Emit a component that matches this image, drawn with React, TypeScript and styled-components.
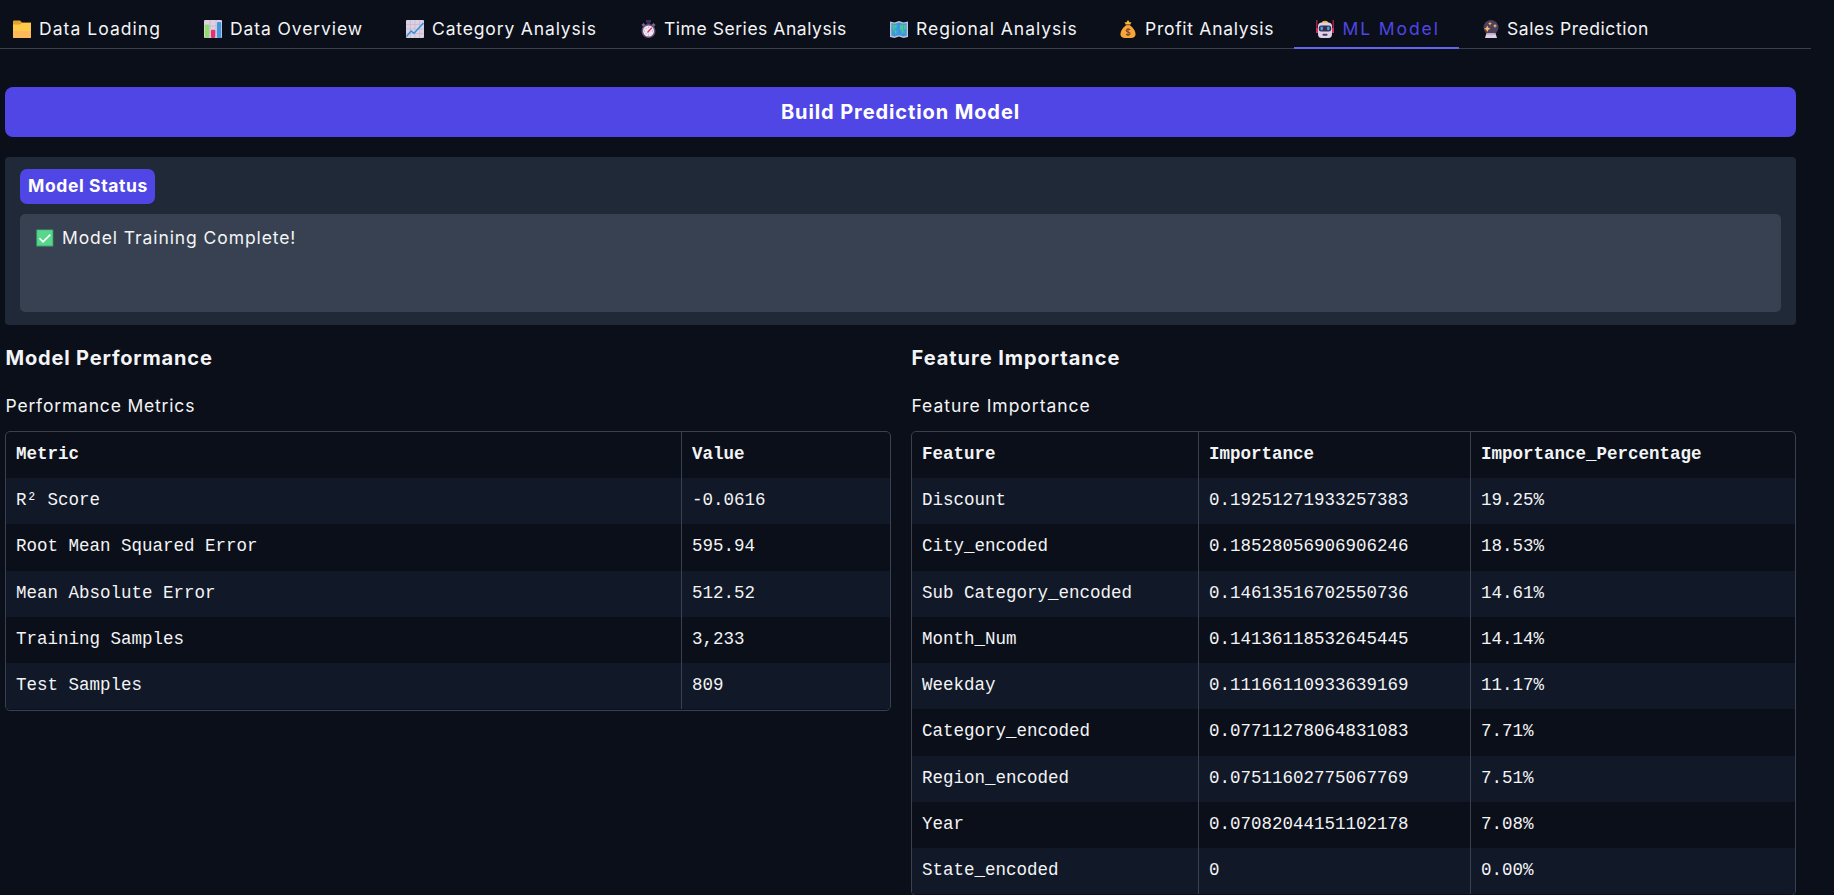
import React from 'react';
import styled, { createGlobalStyle, css } from 'styled-components';

const GlobalStyle = createGlobalStyle`
  * { box-sizing: border-box; }
  body {
    margin: 0;
    background: #0b0f19;
    color: #f3f4f6;
    font-family: Inter, "Open Sans", sans-serif;
    font-size: 17.5px;
  }
`;

const Page = styled.div`
  height: 895px;
  overflow: hidden;
  background: #0b0f19;
`;

const TabBar = styled.nav`
  display: flex;
  width: 1811px;
  height: 49px;
  border-bottom: 1px solid #374151;
`;

const Tab = styled.button<{ $width: number; $active?: boolean; $lead: number }>`
  flex: none;
  display: flex;
  align-items: center;
  width: ${p => p.$width}px;
  height: 49px;
  padding: 10px 0 0 ${p => p.$lead}px;
  border: 0;
  border-bottom: 2px solid ${p => (p.$active ? '#6366f1' : 'transparent')};
  background: transparent;
  color: ${p => (p.$active ? '#4f46e5' : '#f3f4f6')};
  font-family: inherit;
  font-size: 17.5px;
  line-height: 27px;
  white-space: nowrap;
`;

const Text = styled.span<{ $spacing?: number }>`
  letter-spacing: ${p => p.$spacing ?? 0}px;
`;

const Icon = styled.svg<{ $gap?: number }>`
  flex: none;
  width: 18px;
  height: 18px;
  margin-right: ${p => p.$gap ?? 8}px;
`;

const Content = styled.main`
  width: 1791px;
  margin: 38px 0 0 5px;
`;

const BuildButton = styled.button`
  display: block;
  width: 100%;
  height: 50px;
  border: 0;
  border-radius: 8px;
  padding: 0;
  background: #4f46e5;
  color: #fff;
  font-family: inherit;
  font-size: 20px;
  font-weight: 700;
`;

const StatusPanel = styled.section`
  height: 168px;
  margin-top: 20px;
  padding: 12px 15px 13px;
  border-radius: 4px;
  background: #1f2937;
`;

const StatusLabel = styled.div`
  display: flex;
  align-items: center;
  width: 135px;
  height: 35px;
  padding: 0 0 2px 8px;
  border-radius: 7px;
  background: #4f46e5;
  color: #fff;
  font-weight: 700;
  white-space: nowrap;
`;

const StatusBox = styled.div`
  display: flex;
  align-items: flex-start;
  height: 98px;
  margin-top: 10px;
  padding: 11px 16px;
  border-radius: 5px;
  background: #374151;
  line-height: 26px;

  svg { margin-top: 4px; }
`;

const Columns = styled.div`
  display: grid;
  grid-template-columns: 886px 885px;
  gap: 20px;
  margin-top: 18px;
`;

const Heading = styled.h3`
  margin: 0;
  padding-left: 0.5px;
  font-size: 20px;
  font-weight: 700;
  line-height: 30px;
`;

const TableLabel = styled.p`
  margin: 20px 0 11.75px;
  padding-left: 0.5px;
  line-height: 26px;
`;

const TableFrame = styled.div`
  border: 1px solid #374151;
  border-radius: 5px;
  overflow: hidden;
  padding-bottom: 0.75px;
  font-family: "Liberation Mono", monospace;
  font-size: 17.5px;
`;

const Row = styled.div<{ $columns: string; $head?: boolean }>`
  display: grid;
  grid-template-columns: ${p => p.$columns};
  height: 46.25px;
  ${p => p.$head && css`font-weight: 700;`}

  &:nth-child(even) { background: #111827; }
`;

const Cell = styled.div`
  padding: 9px 10px 0;
  line-height: 26px;
  white-space: pre;

  & + & { border-left: 1px solid #374151; }
`;

const FolderIcon = () => (
  <Icon viewBox="0 0 18 18">
    <path d="M0 1.500q0-1 1-1h6l2 2h9v5H0z" fill="#e5a02b" />
    <path d="M0 4.500h7l2-1.500h9v14q0 1-1 1H1q-1 0-1-1z" fill="#ffc94b" />
    <path d="M0 11h18v6q0 1-1 1H1q-1 0-1-1z" fill="#ffb95a" />
  </Icon>
);

const BarChartIcon = () => (
  <Icon viewBox="0 0 18 18">
    <rect width="18" height="18" rx="1" fill="#dcd1e3" />
    <path d="M6 0v18M12 0v18M0 6h18M0 12h18" stroke="#bcaecb" strokeWidth=".6" />
    <rect x="1" y="4.500" width="4.200" height="13.500" rx="1" fill="#8fdc68" />
    <rect x="7" y="9.700" width="4.200" height="8.300" rx="1" fill="#e8306f" />
    <rect x="13" y="2" width="4.200" height="16" rx="1" fill="#3c96e0" />
  </Icon>
);

const LineChartIcon = () => (
  <Icon viewBox="0 0 18 18">
    <rect width="18" height="18" rx="1" fill="#dcd1e3" />
    <path d="M4.500 0v18M9 0v18M13.500 0v18M0 4.500h18M0 9h18M0 13.500h18" stroke="#bfb2cd" strokeWidth=".6" />
    <path d="M.5 16.500 5 11l3 2.200L17.500 3" fill="none" stroke="#2f92dc" strokeWidth="1.500" />
  </Icon>
);

const StopwatchIcon = () => (
  <Icon viewBox="0 0 18 18" $gap={6}>
    <path d="M6 0h5v2.500H10v2H7v-2H6z" fill="#3f2d52" />
    <path d="m1.500 5 2-2 2 2-2 2zM15.500 5l-2-2-2 2 2 2z" fill="#7c688e" />
    <circle cx="8.500" cy="11" r="7" fill="#68547b" />
    <circle cx="8.500" cy="11" r="5.500" fill="#eee7f2" />
    <path d="M8.500 6.500v1M8.500 14.500v1M4 11h1M12 11h1M5.500 8l.7.7M5.500 14l.7-.7" stroke="#8b7a9b" strokeWidth=".7" />
    <path d="m7.500 12.500 4.300-4.700" stroke="#e02960" strokeWidth="1.300" />
  </Icon>
);

const MapIcon = () => (
  <Icon viewBox="0 0 18 18">
    <path d="m0 1.500 4.500 1L9 1l4.500 1.500 4.500-1v15.500l-4.500 1L9 16.500 4.500 18 0 17z" fill="#c7c4da" />
    <path d="m1.300 3 3.200.8L9 2.500l4.500 1.300L16.700 3v12.700l-3.200.9L9 15.300l-4.500 1.300-3.200-.8z" fill="#3d9be0" />
    <path d="m2 5 3-.5 2 1L6 8l-1.500 1.500L6.500 11 6 14.500 4.500 12 3 9zM10 5l3-.5 3 .7-.5 4-1.500.5.5 3-1.700 1.500-1.300-4-1.700-1.500z" fill="#4dc69a" />
    <path d="M4.500 3.500v13M9 2.500v13M13.500 3.500v13" stroke="#2f80c0" strokeWidth=".3" />
  </Icon>
);

const MoneyBagIcon = () => (
  <Icon viewBox="0 0 18 18" $gap={7}>
    <path d="m4.500 2 1.800.5L8 0l1.700 2.500L11.500 2l-2 4h-3z" fill="#f8bd36" />
    <path d="M6.500 5h3c3 2 6 5.500 6 9.200 0 3-2 3.800-7.500 3.800S.5 17.200.5 14.200C.5 10.500 3.500 7 6.500 5" fill="#f6a536" />
    <path d="M6 4.700h4" stroke="#91552f" strokeWidth="1.200" />
    <path d="M10.200 9.800C8.800 8.700 6.200 9 6.200 10.500c0 2 3.800 1 3.800 3s-2.500 2-4 .8M8 8v8" fill="none" stroke="#7c4930" strokeWidth="1.100" />
  </Icon>
);

const RobotIcon = () => (
  <Icon viewBox="0 0 18 18" $gap={8.5}>
    <path d="M.8 0v9M17.200 0v9" stroke="#b82251" strokeWidth="1.300" />
    <path d="M0 8h2v5H0zM16 8h2v5h-2z" fill="#d52e60" />
    <path d="M5.500 3Q6 .7 9 .7T12.500 3z" fill="#f8ae32" />
    <path d="M2 6q0-3.500 4-3.500h6q4 0 4 3.500v8q0 4-3.500 4h-7Q2 18 2 14z" fill="#ded2e6" />
    <rect x="2.800" y="5.500" width="12.400" height="6" rx="2.500" fill="#3c2b4c" />
    <rect x="4.500" y="6.500" width="2.400" height="3.800" rx="1" fill="#32afe8" />
    <rect x="11.100" y="6.500" width="2.400" height="3.800" rx="1" fill="#32afe8" />
    <rect x="6.500" y="13.800" width="5" height="2" rx=".8" fill="#4d3b5e" />
  </Icon>
);

const CrystalBallIcon = () => (
  <Icon viewBox="0 0 18 18" $gap={6}>
    <circle cx="8" cy="7.500" r="7.500" fill="#4b405c" />
    <path d="M3.500 13.200h9L14 18H2z" fill="#ded0e8" />
    <path d="M3 14.200q5 1.500 10 0" fill="none" stroke="#bba7ca" strokeWidth=".8" />
    <path d="m4.300 5.500 1.100 2.200 2.100 1-2.100 1-1.100 2.200-1.100-2.200-2.100-1 2.100-1zM7 1.700l.6 1.400 1.400.6-1.400.6L7 5.700l-.6-1.400L5 3.700l1.400-.6zM12 3.700l.7 1.500 1.500.7-1.500.7L12 8.100l-.7-1.500-1.500-.7 1.500-.7z" fill="#ffb65c" />
  </Icon>
);

const CheckIcon = () => (
  <Icon viewBox="0 0 18 18">
    <rect x=".3" y=".5" width="17" height="17" rx=".6" fill="#3aa86d" />
    <rect x="1.200" y="1.300" width="15.200" height="15.200" rx=".6" fill="#59d68d" />
    <path d="m3.500 9.300 3.500 3.500 7.300-7.200" fill="none" stroke="#fff" strokeWidth="1.600" />
  </Icon>
);

const tabs = [
  { label: 'Data Loading', icon: <FolderIcon />, width: 184, lead: 13, spacing: 1.05 },
  { label: 'Data Overview', icon: <BarChartIcon />, width: 202, lead: 20, spacing: 0.9 },
  { label: 'Category Analysis', icon: <LineChartIcon />, width: 234, lead: 20, spacing: 0.85 },
  { label: 'Time Series Analysis', icon: <StopwatchIcon />, width: 250, lead: 20, spacing: 0.54 },
  { label: 'Regional Analysis', icon: <MapIcon />, width: 230, lead: 20, spacing: 0.98 },
  { label: 'Profit Analysis', icon: <MoneyBagIcon />, width: 194, lead: 20, spacing: 0.72 },
  { label: 'ML Model', icon: <RobotIcon />, width: 165, lead: 22, spacing: 1.9 },
  { label: 'Sales Prediction', icon: <CrystalBallIcon />, width: 210, lead: 24, spacing: 0.55 },
];

const metrics = [
  ['Metric', 'Value'],
  ['R² Score', '-0.0616'],
  ['Root Mean Squared Error', '595.94'],
  ['Mean Absolute Error', '512.52'],
  ['Training Samples', '3,233'],
  ['Test Samples', '809'],
];

const features = [
  ['Feature', 'Importance', 'Importance_Percentage'],
  ['Discount', '0.19251271933257383', '19.25%'],
  ['City_encoded', '0.18528056906906246', '18.53%'],
  ['Sub Category_encoded', '0.14613516702550736', '14.61%'],
  ['Month_Num', '0.14136118532645445', '14.14%'],
  ['Weekday', '0.11166110933639169', '11.17%'],
  ['Category_encoded', '0.07711278064831083', '7.71%'],
  ['Region_encoded', '0.07511602775067769', '7.51%'],
  ['Year', '0.07082044151102178', '7.08%'],
  ['State_encoded', '0', '0.00%'],
];

function DataTable({ rows, columns }: { rows: string[][]; columns: string }) {
  return (
    <TableFrame>
      {rows.map((row, i) => (
        <Row key={row[0]} $columns={columns} $head={i === 0}>
          {row.map(value => <Cell key={value}>{value}</Cell>)}
        </Row>
      ))}
    </TableFrame>
  );
}

export default function App() {
  return (
    <Page>
      <GlobalStyle />
      <TabBar>
        {tabs.map(tab => (
          <Tab key={tab.label} $width={tab.width} $lead={tab.lead} $active={tab.label === 'ML Model'}>
            {tab.icon}
            <Text $spacing={tab.spacing}>{tab.label}</Text>
          </Tab>
        ))}
      </TabBar>
      <Content>
        <BuildButton><Text $spacing={0.9}>Build Prediction Model</Text></BuildButton>
        <StatusPanel>
          <StatusLabel><Text $spacing={0.62}>Model Status</Text></StatusLabel>
          <StatusBox>
            <CheckIcon />
            <Text $spacing={0.91}>Model Training Complete!</Text>
          </StatusBox>
        </StatusPanel>
        <Columns>
          <section>
            <Heading><Text $spacing={0.84}>Model Performance</Text></Heading>
            <TableLabel><Text $spacing={0.82}>Performance Metrics</Text></TableLabel>
            <DataTable rows={metrics} columns="675px 1fr" />
          </section>
          <section>
            <Heading><Text $spacing={0.97}>Feature Importance</Text></Heading>
            <TableLabel><Text $spacing={0.98}>Feature Importance</Text></TableLabel>
            <DataTable rows={features} columns="286px 272px 1fr" />
          </section>
        </Columns>
      </Content>
    </Page>
  );
}
